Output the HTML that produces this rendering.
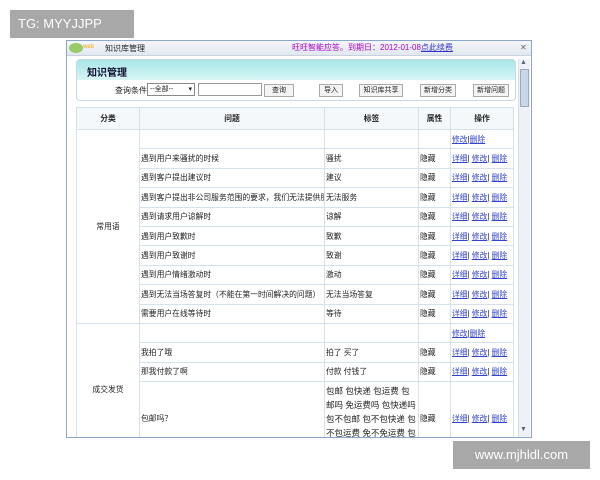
<!DOCTYPE html>
<html><head><meta charset="utf-8"><style>
*{margin:0;padding:0;box-sizing:border-box}
body{width:600px;height:480px;background:#fff;position:relative;overflow:hidden;font-family:"Liberation Sans","Noto Sans CJK SC",sans-serif;font-size:8px;color:#222}
.abs{position:absolute}
.win{left:66px;top:40px;width:466px;height:398px;border:1px solid #8aa6c8;background:#fff;overflow:hidden}
.tb{left:0;top:0;width:464px;height:15px;background:linear-gradient(#f4f7fb,#e2e8f0);border-bottom:1px solid #c8d2de}
.panel{left:9px;top:18px;width:440px;height:42px;border:1px solid #c6dbe0;border-radius:4px;background:#fff}
.ph{left:0;top:0;width:438px;height:20px;background:linear-gradient(#a9e6e8,#d8f4f4);font-weight:bold;font-size:10px;padding:4px 0 0 10px;color:#113}
.btn{position:absolute;top:24px;height:13px;border:1px solid #aaa;background:#f4f4f4;font-size:7px;text-align:center;line-height:11px}
table{position:absolute;left:9px;top:66px;width:437px;border-collapse:collapse;font-size:7.8px;table-layout:fixed}
td,th{border:1px solid #d6e2ea;height:19.4px;padding:0 1px;vertical-align:middle;white-space:nowrap;overflow:hidden}
th{background:#f4f8fa;height:22px;font-weight:bold}
a{color:#3344cc;text-decoration:underline}
.sb{left:451px;top:18px;width:12px;height:378px;background:#eef2f7;border-left:1px solid #d8dee6}
</style></head><body>
<div class="abs" style="left:10px;top:10px;width:124px;height:28px;background:#a8a8a8;color:#fff;font-size:13px;line-height:28px;padding-left:8px">TG: MYYJJPP</div>
<div class="abs win">
 <div class="abs tb">
  <div class="abs" style="left:2px;top:2px;width:14px;height:10px;border-radius:50%;background:#9c6"></div>
  <div class="abs" style="left:16px;top:3px;font-size:6px;color:#fa0">web</div>
  <div class="abs" style="left:38px;top:2px;font-size:8px">知识库管理</div>
  <div class="abs" style="left:225px;top:1px;font-size:8px;color:#a0c">旺旺智能应答。到期日：2012-01-08<u style="color:#33c">点此续费</u></div>
  <div class="abs" style="left:453px;top:2px;font-size:8px;color:#666">✕</div>
 </div>
 <div class="abs panel">
  <div class="abs ph">知识管理</div>
  <div class="abs" style="left:38px;top:25px">查询条件</div>
  <div class="abs" style="left:70px;top:23px;width:48px;height:13px;border:1px solid #888;font-size:7px;padding-left:2px;line-height:11px">--全部-- <span style="float:right;padding-right:2px">▾</span></div>
  <div class="abs" style="left:121px;top:23px;width:64px;height:13px;border:1px solid #999"></div>
  <div class="btn" style="left:187px;width:30px">查询</div>
  <div class="btn" style="left:242px;width:24px">导入</div>
  <div class="btn" style="left:282px;width:44px">知识库共享</div>
  <div class="btn" style="left:343px;width:36px">新增分类</div>
  <div class="btn" style="left:396px;width:36px">新增问题</div>
 </div>
 <table>
  <colgroup><col style="width:63px"><col style="width:185px"><col style="width:94px"><col style="width:32px"><col style="width:63px"></colgroup>
  <tr><th>分类</th><th>问题</th><th>标签</th><th>属性</th><th>操作</th></tr>
  <tr><td rowspan="10" style="text-align:center">常用语</td><td style="border-top-color:#fff;border-left-color:#fff"></td><td style="border-top-color:#fff"></td><td style="border-top-color:#fff"></td><td><a>修改</a>|<a>删除</a></td></tr>
  <tr><td>遇到用户来骚扰的时候</td><td>骚扰</td><td>隐藏</td><td><a>详细</a>| <a>修改</a>| <a>删除</a></td></tr>
  <tr><td>遇到客户提出建议时</td><td>建议</td><td>隐藏</td><td><a>详细</a>| <a>修改</a>| <a>删除</a></td></tr>
  <tr><td>遇到客户提出非公司服务范围的要求，我们无法提供服</td><td>无法服务</td><td>隐藏</td><td><a>详细</a>| <a>修改</a>| <a>删除</a></td></tr>
  <tr><td>遇到请求用户谅解时</td><td>谅解</td><td>隐藏</td><td><a>详细</a>| <a>修改</a>| <a>删除</a></td></tr>
  <tr><td>遇到用户致歉时</td><td>致歉</td><td>隐藏</td><td><a>详细</a>| <a>修改</a>| <a>删除</a></td></tr>
  <tr><td>遇到用户致谢时</td><td>致谢</td><td>隐藏</td><td><a>详细</a>| <a>修改</a>| <a>删除</a></td></tr>
  <tr><td>遇到用户情绪激动时</td><td>激动</td><td>隐藏</td><td><a>详细</a>| <a>修改</a>| <a>删除</a></td></tr>
  <tr><td>遇到无法当场答复时（不能在第一时间解决的问题）</td><td>无法当场答复</td><td>隐藏</td><td><a>详细</a>| <a>修改</a>| <a>删除</a></td></tr>
  <tr><td>需要用户在线等待时</td><td>等待</td><td>隐藏</td><td><a>详细</a>| <a>修改</a>| <a>删除</a></td></tr>
  <tr><td rowspan="4" style="text-align:center">成交发货</td><td></td><td></td><td></td><td><a>修改</a>|<a>删除</a></td></tr>
  <tr><td>我拍了哦</td><td>拍了 买了</td><td>隐藏</td><td><a>详细</a>| <a>修改</a>| <a>删除</a></td></tr>
  <tr><td>那我付款了啊</td><td>付款 付钱了</td><td>隐藏</td><td><a>详细</a>| <a>修改</a>| <a>删除</a></td></tr>
  <tr><td>包邮吗？</td><td style="line-height:14px;white-space:normal;height:74px;font-size:8.5px">包邮 包快递 包运费 包邮吗 免运费吗 包快递吗 包不包邮 包不包快递 包不包运费 免不免运费 包快？ 包快递 包运费</td><td>隐藏</td><td><a>详细</a>| <a>修改</a>| <a>删除</a></td></tr>
 </table>
 <div class="abs sb">
  <div class="abs" style="left:1px;top:0;font-size:7px;color:#567">▲</div>
  <div class="abs" style="left:1px;top:10px;width:9px;height:38px;background:#c9d6ea;border:1px solid #9ab"></div>
  <div class="abs" style="left:1px;top:367px;font-size:7px;color:#567">▼</div>
 </div>
</div>
<div class="abs" style="left:453px;top:441px;width:137px;height:28px;background:#a8a8a8;color:#fff;font-size:13px;line-height:28px;text-align:center">www.mjhldl.com</div>
</body></html>
